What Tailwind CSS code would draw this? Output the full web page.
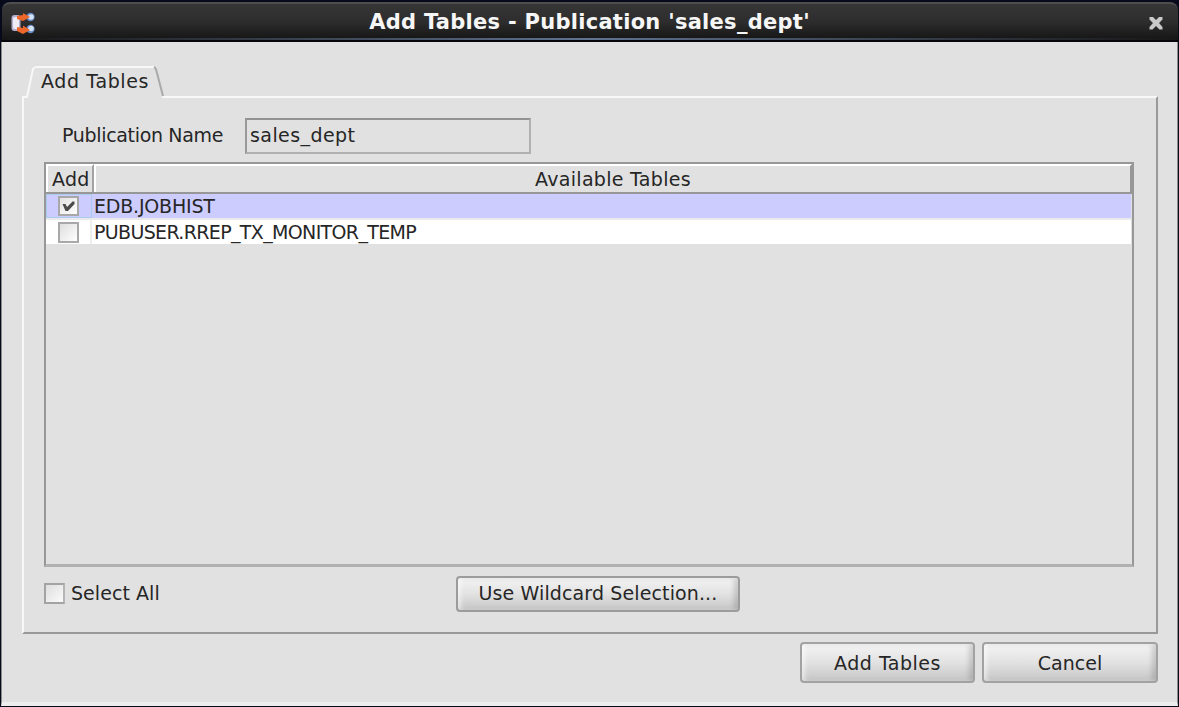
<!DOCTYPE html>
<html lang="en"><head><meta charset="utf-8"><title>Add Tables</title>
<script src="https://cdn.jsdelivr.net/npm/@tailwindcss/browser@4"></script></head>
<body class="w-[1179px] h-[707px] overflow-hidden bg-[#070a1a] font-['DejaVu_Sans',sans-serif] text-[19px] leading-6 text-[#262626] whitespace-nowrap">
<main class="flex flex-col w-[1179px] h-[707px] pt-[2px]">
<header class="relative flex items-center h-10 shrink-0 ml-[2px] mr-[1px] rounded-t-[8px] border-t-2 border-t-[#4e4e4e] bg-linear-to-b from-[#363636] via-[#2d2d2d] to-[#151515] border-b-2 border-b-[#050609] pl-[9px] pr-[15px]">
<div class="absolute left-0 right-0 bottom-0 h-[2px] bg-linear-to-r from-[#171717] via-[#5f7392] to-[#171717]"></div>
<svg class="w-6 h-6 mt-[3px]" viewBox="0 0 24 24"><rect x="0.5" y="3" width="9" height="16" rx="3" fill="#b3aecb"/><rect x="2" y="5" width="6" height="12" rx="2" fill="#eeebf6"/><circle cx="19.500" cy="5" r="4.200" fill="#6489c4"/><circle cx="20" cy="5" r="2.800" fill="#d3e2f5"/><circle cx="19.500" cy="17" r="4.200" fill="#6489c4"/><circle cx="20" cy="16.500" r="2.800" fill="#d3e2f5"/><path d="M6 4L12 3V1L19 5L12 9L6 7ZM6 15L12 16V13.500L19 18L12 22L6 19Z" fill="#ee672a"/></svg>
<h1 class="flex-1 text-center font-bold text-[21px] tracking-[0.28px] text-[#f6f6f6] pr-[5px]">Add Tables - Publication 'sales_dept'</h1>
<svg class="w-[14px] h-[14px] mt-[2px]" viewBox="0 0 14 14" fill="#c9c9c9"><path d="M0.500 1H4L7 4L10 1H13.500V3.500L10 7L13.500 11V13.500H10.500L7 10L3.500 13.500H0.500V11L4 7L0.500 3.500Z"/></svg>
</header>
<section class="flex-1 flex flex-col bg-[#e1e1e1] ml-[1px] mr-[1px] border-l-[1px] border-l-[#8a8a8a] border-r border-r-[#8a8a8a] mb-[1px] border-b-[4px] border-b-[#ededed] pt-6 pl-5 pr-[19px]">
<div class="relative z-10 flex items-center h-[31px] ml-[2px] -mb-px w-[141px] pl-[17px]">
<svg class="absolute left-0 top-0 w-[141px] h-[32px]" viewBox="0 0 141 32" fill="none" stroke-width="2"><path d="M3 32L9 3L12 2H131L138 32Z" fill="#e1e1e1"/><path d="M1 31H3L9 3Q10 1 13 1H130" stroke="#f8f8f8"/><path d="M130 1Q132 2 133 7L139 30" stroke="#a9a9a9"/></svg>
<span class="relative tracking-[0.62px] -mt-[2px]">Add Tables</span></div>
<div class="h-[538px] shrink-0 border-2 border-t-[#f8f8f8] border-l-[#f8f8f8] border-r-[#999] border-b-[#999] pl-[20px] pr-[22px] pt-[20px] flex flex-col">
<div class="flex items-center h-[36px] pl-[18px]"><label class="w-[183px] tracking-[-0.33px] -mt-[3px]">Publication Name</label><div class="w-[286px] h-[36px] border-2 border-[#b0b0b0] border-t-[#929292] border-l-[#999] flex items-center pl-[3px] tracking-[0.42px] pb-[3px]">sales_dept</div></div>
<div class="mt-2 h-[405px] shrink-0 border-2 border-[#979797] border-b-[#b1b1b1] border-b-[3px]">
<div class="grid grid-cols-[48px_1fr] h-[30px] border-b-2 border-[#979797]">
<div class="border-t-2 border-l-2 border-t-white border-l-white border-r-2 border-r-[#a3a3a3] pl-[4px] tracking-[0.3px] pt-px">Add</div>
<div class="border-t-2 border-l-2 border-t-white border-l-white border-r-2 border-r-[#979797] text-center tracking-[0.3px] pt-px">Available Tables</div></div>
<div class="grid grid-cols-[46px_1fr] h-[24px] bg-[#ccf] mr-[1px]"><div class="border border-[#aacbec] flex items-center justify-center pr-px"><div class="w-[21px] h-5 border-2 border-[#a8a8a8] bg-linear-to-br from-[#e2e2e2] to-white flex items-center justify-center"><svg class="w-[15px] h-[14px]" viewBox="0 0 15 14"><path d="M1.500 5H4.500L6 8L11.500 2.500H13.500V5L7 12H4.500Z" fill="#4b4b4b"/></svg></div></div><div class="pl-[2px] tracking-[-0.2px] leading-6">EDB.JOBHIST</div></div>
<div class="h-[2px] bg-[#eaeaea] mr-[1px]"></div>
<div class="grid grid-cols-[46px_1fr] h-[24px] bg-white mr-[1px]"><div class="border-r-2 border-[#eee] flex items-center justify-center"><div class="w-[21px] h-[21px] border-2 border-[#a8a8a8] bg-linear-to-br from-[#dedede] to-white"></div></div><div class="pl-[2px] tracking-[-0.65px] leading-[24px]">PUBUSER.RREP_TX_MONITOR_TEMP</div></div>
</div>
<div class="flex items-center h-9 mt-[9px] shrink-0"><div class="w-[21px] h-[21px] border-2 border-[#a3a3a3] border-r-[#b5b5b5] bg-linear-to-br from-[#dedede] to-[#fbfbfb] -mt-[2px]"></div><span class="ml-[6px] tracking-[0.05px] -mt-[3px] w-[385px]">Select All</span>
<button class="w-[284px] h-9 rounded-[4px] border-2 border-[#9c9c9c] bg-linear-to-b from-[#f4f4f4] via-[#e2e2e2] to-[#c6c6c6] shadow-[inset_3px_0_4px_#ffffff88,inset_-4px_0_5px_#00000026] tracking-[0.12px] pb-[3px] flex items-center justify-center">Use Wildcard Selection...</button></div>
</div>
<div class="flex justify-end gap-[7px] mt-2 shrink-0">
<button class="w-[175px] h-[41px] rounded-[4px] border-2 border-[#a2a2a2] bg-linear-to-b from-[#f4f4f4] via-[#e2e2e2] to-[#c6c6c6] shadow-[inset_3px_0_4px_#ffffff88,inset_-4px_0_5px_#00000026] tracking-[0.5px] flex items-center justify-center">Add Tables</button>
<button class="w-[176px] h-[41px] rounded-[4px] border-2 border-[#a2a2a2] bg-linear-to-b from-[#f4f4f4] via-[#e2e2e2] to-[#c6c6c6] shadow-[inset_3px_0_4px_#ffffff88,inset_-4px_0_5px_#00000026] flex items-center justify-center">Cancel</button></div>
</section></main></body></html>
